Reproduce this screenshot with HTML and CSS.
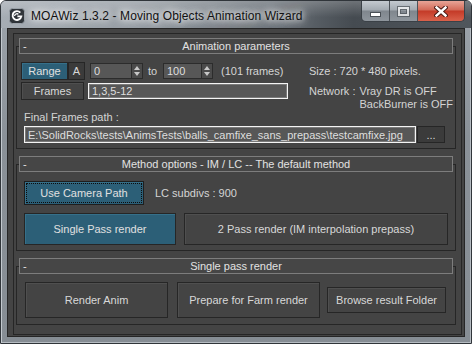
FILE: index.html
```html
<!DOCTYPE html>
<html lang="en">
<head>
    <meta charset="UTF-8">
    <title>MOAWiz 1.3.2 - Moving Objects Animation Wizard</title>
    <link rel="stylesheet" href="styles.css">
</head>
<body>
    <div class="window">
        <div class="titlebar">
            <svg class="app-icon" width="16" height="16" viewBox="0 0 16 16">
                <rect x="0.5" y="0.5" width="15" height="15" rx="3" fill="#2e3338" stroke="#9aa1a8"/>
                <path d="M11.3 4.6 A4.4 4.4 0 1 0 12.3 8.4 L8.4 8.4" fill="none" stroke="#fff" stroke-width="1.9"/>
                <path d="M5.6 8 A2.4 2.4 0 0 1 9.4 6.2" fill="none" stroke="#fff" stroke-width="1.3"/>
            </svg>
            <span class="title">MOAWiz 1.3.2 - Moving Objects Animation Wizard</span>
            <div class="caption-buttons">
                <div class="cap cap-min"><span></span></div>
                <div class="cap cap-max"><span></span></div>
                <div class="cap cap-close">
                    <svg width="14" height="11" viewBox="0 0 14 11">
                        <path d="M2.5 1.5 L11.5 9.5 M11.5 1.5 L2.5 9.5" stroke="#4a1a14" stroke-width="4.4" stroke-linecap="square"/>
                        <path d="M2.5 1.5 L11.5 9.5 M11.5 1.5 L2.5 9.5" stroke="#fff" stroke-width="2.4" stroke-linecap="square"/>
                    </svg>
                </div>
            </div>
        </div>

        <div class="client">
            <div class="rollups">

                <div class="rollout first">
                    <div class="rollout-head"><span class="dash">-</span><span>Animation parameters</span><span></span></div>
                    <div class="anim-body">
                        <div class="frame-ranges">
                            <div class="row">
                                <button class="btn btn-blue btn-range">Range</button>
                                <button class="btn btn-dark btn-a">A</button>
                                <div class="spinner sp-start">
                                    <input class="field" value="0">
                                    <div class="arrows"><i class="up"></i><i class="down"></i></div>
                                </div>
                                <span class="to">to</span>
                                <div class="spinner sp-end">
                                    <input class="field" value="100">
                                    <div class="arrows"><i class="up"></i><i class="down"></i></div>
                                </div>
                                <span class="count">(101 frames)</span>
                            </div>
                            <div class="row row-frames">
                                <button class="btn btn-frames">Frames</button>
                                <input class="edit frames-edit" value="1,3,5-12">
                            </div>
                        </div>
                        <div class="info">
                            <div class="size">Size : 720 * 480 pixels.</div>
                            <div class="network">
                                <span>Network :</span>
                                <div class="net-values">
                                    <div>Vray DR is OFF</div>
                                    <div>BackBurner is OFF</div>
                                </div>
                            </div>
                        </div>
                    </div>
                    <div class="path-block">
                        <div class="label">Final Frames path :</div>
                        <div class="path-row">
                            <input class="edit path-edit" value="E:\SolidRocks\tests\AnimsTests\balls_camfixe_sans_prepass\testcamfixe.jpg">
                            <button class="btn btn-dark btn-browse">...</button>
                        </div>
                    </div>
                </div>

                <div class="rollout">
                    <div class="rollout-head"><span class="dash">-</span><span>Method options - IM / LC -- The default method</span><span></span></div>
                    <div class="method-top">
                        <button class="btn btn-blue btn-camera">Use Camera Path</button>
                        <span class="lc">LC subdivs : 900</span>
                    </div>
                    <div class="method-passes">
                        <button class="btn btn-blue btn-single">Single Pass render</button>
                        <button class="btn btn-two">2 Pass render (IM interpolation prepass)</button>
                    </div>
                </div>

                <div class="rollout last">
                    <div class="rollout-head"><span class="dash">-</span><span>Single pass render</span><span></span></div>
                    <div class="render-row">
                        <button class="btn btn-render">Render Anim</button>
                        <button class="btn btn-render btn-farm">Prepare for Farm render</button>
                        <button class="btn btn-result">Browse result Folder</button>
                    </div>
                </div>

            </div>
        </div>
    </div>
</body>
</html>
```

FILE: styles.css
```css
body {
    margin: 0;
    background: #ffffff;
    font-family: 'Liberation Sans', Arial, sans-serif;
    font-size: 11px;
    color: #d4d4d4;
}
.window {
    width: 472px;
    height: 344px;
    box-sizing: border-box;
    display: flex;
    flex-direction: column;
    padding: 0 6px 6px 6px;
    border: 1px solid #30353a;
    border-radius: 6px 6px 0 0;
    background: linear-gradient(to bottom, #9ea5ac, #8a9198 40%, #868d94);
    box-shadow: inset 1px 1px 0 #c3c9cf, inset -1px -1px 0 #b5bbc1;
}

/* title bar */
.titlebar {
    height: 27px;
    display: flex;
    align-items: center;
    margin: 0 -6px;
    padding-left: 8px;
    border-radius: 5px 5px 0 0;
    background:
        linear-gradient(to bottom, rgba(255,255,255,0.22), rgba(255,255,255,0) 60%),
        linear-gradient(90deg, #a6adb4 0%, #959ca3 30%, #6a7178 58%, #454b51 75%, #50565c 100%);
}
.app-icon {
    flex: none;
    margin-top: 2px;
}
.title {
    margin-left: 6px;
    margin-top: 2px;
    font-family: 'Liberation Sans', Arial, sans-serif;
    font-size: 12px;
    letter-spacing: 0.1px;
    color: #111;
    text-shadow: 0 0 6px #fff, 0 0 10px rgba(255,255,255,0.9), 0 0 14px rgba(255,255,255,0.7);
}
.caption-buttons {
    margin-left: auto;
    margin-right: 6px;
    align-self: flex-start;
    display: flex;
    height: 20px;
    border: 1px solid #3b4147;
    border-top: none;
    border-radius: 0 0 5px 5px;
    overflow: hidden;
}
.cap {
    display: flex;
    align-items: center;
    justify-content: center;
    height: 100%;
}
.cap-min, .cap-max {
    width: 27px;
    border-right: 1px solid #4c5258;
    background: linear-gradient(to bottom, #c4cad0, #a3aab1 45%, #7f868d 50%, #8e959c);
}
.cap-min span {
    width: 9px;
    height: 3px;
    margin-top: 6px;
    background: #fff;
    box-shadow: 0 0 0 1px #4a5056;
}
.cap-max span {
    width: 7px;
    height: 5px;
    border: 2px solid #fff;
    box-shadow: 0 0 0 1px #4a5056, inset 0 0 0 1px #4a5056;
    opacity: 0.7;
}
.cap-close {
    width: 46px;
    background: linear-gradient(to bottom, #e7a497, #d26a58 45%, #c43a27 50%, #d9614b);
}

/* client area */
.client {
    flex: 1;
    display: flex;
    background: #444;
    border: 1px solid #262626;
}
.rollups {
    flex: 1;
    margin: 4px 2px 1px 5px;
    padding: 0 5px 0 2px;
    border: 1px solid #262626;
    background: #444;
}
.rollout {
    margin-top: 15px;
    border: 1px solid #262626;
}
.rollout.first {
    margin-top: 12px;
    padding-bottom: 5px;
}
.rollout.last {
    margin-top: 15px;
}
.rollout-head {
    height: 16px;
    box-sizing: border-box;
    margin: -9px 2px 0 2px;
    display: grid;
    grid-template-columns: 1fr auto 1fr;
    align-items: center;
    border: 1px solid #7d7d7d;
    background: #464646;
    color: #e2e2e2;
    line-height: 14px;
}
.rollout-head .dash {
    padding-left: 3px;
}

/* buttons and fields */
.btn {
    font-family: 'Liberation Sans', Arial, sans-serif;
    font-size: 11px;
    color: #d8d8d8;
    background: #444;
    border: 1px solid #262626;
    box-shadow: inset 1px 1px 0 #4f4f4f;
    padding: 0;
    margin: 0;
}
.btn-blue {
    background: #2c5f77;
    box-shadow: inset 1px 1px 0 #36708a;
    color: #e0e0e0;
}
.btn-dark {
    background: #3b3b3b;
    box-shadow: none;
}
.field, .edit {
    font-family: 'Liberation Sans', Arial, sans-serif;
    font-size: 11px;
    color: #dedede;
    background: #575757;
    margin: 0;
    outline: none;
    box-sizing: border-box;
}
.field {
    height: 16px;
    padding: 0 3px;
    border: 1px solid #2c2c2c;
    border-right: none;
}
.edit {
    height: 16px;
    padding: 0 3px;
    border: 1px solid #f4f4f4;
    box-shadow: inset 0 0 0 1px #7a7a7a;
}

/* animation parameters */
.anim-body {
    display: flex;
    margin-top: 8px;
    padding-left: 4px;
}
.frame-ranges {
    width: 268px;
}
.row {
    display: flex;
    align-items: center;
}
.btn-range {
    width: 47px;
    height: 18px;
}
.btn-a {
    width: 17px;
    height: 18px;
}
.spinner {
    display: flex;
    height: 16px;
}
.sp-start {
    margin-left: 5px;
}
.sp-start .field {
    width: 41px;
}
.sp-end .field {
    width: 38px;
}
.arrows {
    width: 12px;
    display: flex;
    flex-direction: column;
    justify-content: center;
    align-items: center;
    gap: 2px;
    background: #4b4b4b;
    border: 1px solid #2c2c2c;
    box-sizing: border-box;
}
.arrows i {
    width: 0;
    height: 0;
    border-left: 3px solid transparent;
    border-right: 3px solid transparent;
}
.arrows .up {
    border-bottom: 4px solid #c8c8c8;
}
.arrows .down {
    border-top: 4px solid #c8c8c8;
}
.to {
    width: 15px;
    margin-left: 5px;
}
.count {
    margin-left: 8px;
}
.row-frames {
    margin-top: 2px;
}
.btn-frames {
    width: 63px;
    height: 18px;
}
.frames-edit {
    width: 200px;
    margin-left: 4px;
}
.info {
    margin-left: 20px;
    padding-top: 3px;
    line-height: 13px;
}
.network {
    display: flex;
    margin-top: 7px;
}
.net-values {
    margin-left: 4px;
}
.path-block {
    padding-left: 7px;
}
.label {
    line-height: 13px;
}
.path-row {
    display: flex;
    margin-top: 2px;
}
.path-edit {
    width: 392px;
    height: 17px;
}
.btn-browse {
    width: 28px;
    height: 17px;
    margin-left: 1px;
    line-height: 12px;
}

/* method options */
.method-top {
    display: flex;
    align-items: center;
    margin: 9px 0 0 7px;
}
.btn-camera {
    width: 120px;
    height: 24px;
    border-color: #1e1e1e;
    outline: 1px dotted #0c0c0c;
    outline-offset: -3px;
}
.lc {
    margin-left: 11px;
}
.method-passes {
    display: flex;
    gap: 8px;
    margin: 8px 0 0 7px;
    padding-bottom: 5px;
}
.btn-single {
    width: 152px;
    height: 32px;
}
.btn-two {
    width: 264px;
    height: 32px;
}

/* single pass render */
.render-row {
    display: flex;
    align-items: center;
    margin: 8px 0 0 8px;
    padding-bottom: 6px;
}
.btn-render {
    width: 143px;
    height: 36px;
}
.btn-farm {
    margin-left: 9px;
}
.btn-result {
    width: 119px;
    height: 26px;
    margin-left: 7px;
}
```
